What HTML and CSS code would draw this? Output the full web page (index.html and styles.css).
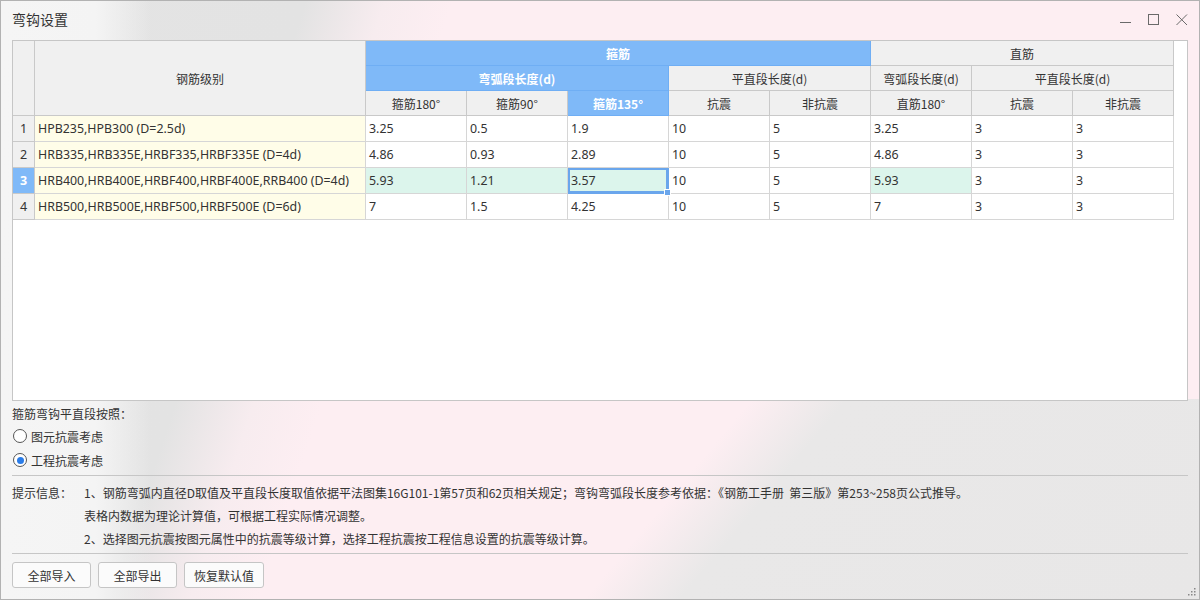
FILE: index.html
```html
<!DOCTYPE html>
<html lang="zh-CN">
<head>
<meta charset="utf-8">
<title>弯钩设置</title>
<link rel="stylesheet" href="styles.css">
</head>
<body>
<div class="window">
  <div class="titlebar">
    <span class="title">弯钩设置</span>
    <div class="controls">
      <svg class="ctl" width="12" height="12" viewBox="0 0 12 12"><line x1="0" y1="8.5" x2="11" y2="8.5" stroke="#6a6a6a" stroke-width="1"/></svg>
      <svg class="ctl" width="12" height="12" viewBox="0 0 12 12"><rect x="0.5" y="0.5" width="10" height="10" fill="none" stroke="#6a6a6a" stroke-width="1"/></svg>
      <svg class="ctl" width="12" height="12" viewBox="0 0 12 12"><path d="M0.5 0.5 L11 11 M11 0.5 L0.5 11" stroke="#6a6a6a" stroke-width="1" fill="none"/></svg>
    </div>
  </div>

  <div class="grid-wrap">
    <div class="grid">
      <div class="c h corner r1-3"></div>
      <div class="c h name-h r1-3">钢筋级别</div>
      <div class="c h blue span5">箍筋</div>
      <div class="c h span3">直筋</div>

      <div class="c h blue span3">弯弧段长度(d)</div>
      <div class="c h span2">平直段长度(d)</div>
      <div class="c h">弯弧段长度(d)</div>
      <div class="c h span2">平直段长度(d)</div>

      <div class="c h">箍筋180°</div>
      <div class="c h">箍筋90°</div>
      <div class="c h blue">箍筋135°</div>
      <div class="c h">抗震</div>
      <div class="c h">非抗震</div>
      <div class="c h">直筋180°</div>
      <div class="c h">抗震</div>
      <div class="c h">非抗震</div>

      <div class="c num">1</div>
      <div class="c d name">HPB235,HPB300 (D=2.5d)</div>
      <div class="c d">3.25</div><div class="c d">0.5</div><div class="c d">1.9</div><div class="c d">10</div><div class="c d">5</div><div class="c d">3.25</div><div class="c d">3</div><div class="c d">3</div>

      <div class="c num">2</div>
      <div class="c d name">HRB335,HRB335E,HRBF335,HRBF335E (D=4d)</div>
      <div class="c d">4.86</div><div class="c d">0.93</div><div class="c d">2.89</div><div class="c d">10</div><div class="c d">5</div><div class="c d">4.86</div><div class="c d">3</div><div class="c d">3</div>

      <div class="c num sel">3</div>
      <div class="c d name">HRB400,HRB400E,HRBF400,HRBF400E,RRB400 (D=4d)</div>
      <div class="c d green">5.93</div><div class="c d green">1.21</div><div class="c d green current">3.57</div><div class="c d">10</div><div class="c d">5</div><div class="c d green">5.93</div><div class="c d">3</div><div class="c d">3</div>

      <div class="c num">4</div>
      <div class="c d name">HRB500,HRB500E,HRBF500,HRBF500E (D=6d)</div>
      <div class="c d">7</div><div class="c d">1.5</div><div class="c d">4.25</div><div class="c d">10</div><div class="c d">5</div><div class="c d">7</div><div class="c d">3</div><div class="c d">3</div>
    </div>
  </div>

  <div class="option-label">箍筋弯钩平直段按照：</div>
  <div class="radio"><span class="circle"></span><span>图元抗震考虑</span></div>
  <div class="radio"><span class="circle checked"></span><span>工程抗震考虑</span></div>

  <div class="sep sep1"></div>

  <div class="hints">
    <div class="hint-title">提示信息：</div>
    <div class="hint-lines">
      <div>1、钢筋弯弧内直径D取值及平直段长度取值依据平法图集16G101-1第57页和62页相关规定；弯钩弯弧段长度参考依据：《钢筋工手册&nbsp;&nbsp;第三版》第253~258页公式推导。</div>
      <div>表格内数据为理论计算值，可根据工程实际情况调整。</div>
      <div>2、选择图元抗震按图元属性中的抗震等级计算，选择工程抗震按工程信息设置的抗震等级计算。</div>
    </div>
  </div>

  <div class="sep sep2"></div>

  <div class="buttons">
    <div class="btn">全部导入</div>
    <div class="btn">全部导出</div>
    <div class="btn">恢复默认值</div>
  </div>

  <svg class="grip" width="8" height="8" viewBox="0 0 8 8">
    <rect x="6" y="0" width="1.5" height="1.5" fill="#888"/>
    <rect x="3" y="3" width="1.5" height="1.5" fill="#888"/>
    <rect x="6" y="3" width="1.5" height="1.5" fill="#888"/>
    <rect x="0" y="6" width="1.5" height="1.5" fill="#888"/>
    <rect x="3" y="6" width="1.5" height="1.5" fill="#888"/>
    <rect x="6" y="6" width="1.5" height="1.5" fill="#888"/>
  </svg>
</div>
</body>
</html>
```

FILE: styles.css
```css
* { box-sizing: border-box; }
html, body { margin: 0; padding: 0; }
body {
  width: 1200px;
  height: 600px;
  overflow: hidden;
  font-family: "Noto Sans", "Noto Sans CJK SC", sans-serif;
  color: #333;
}
.window {
  position: relative;
  width: 1200px;
  height: 600px;
  border: 1px solid #b2b2b2;
  background:
    linear-gradient(to right, #f5f5f5 0, #f4f4f4 95px, rgba(244,244,244,0) 150px),
    linear-gradient(130deg, rgba(233,232,232,0) 0, rgba(233,232,232,0) 55%, #e9e8e8 62%, #e8e7e7 100%) left bottom / 100% 200px no-repeat,
    linear-gradient(108deg, #e4e4e4 0, #e3e3e3 290px, #f7ecef 365px, #fdeef2 430px, #fdeef2 100%);
}
.titlebar {
  height: 39px;
  display: flex;
  align-items: center;
  justify-content: space-between;
  padding: 0 11px 0 11px;
}
.title {
  font-size: 14px;
  line-height: 20px;
  margin-top: -1px;
}
.controls {
  display: flex;
  align-items: center;
  gap: 16px;
  margin-top: -1px;
}
.ctl { display: block; }

.grid-wrap {
  margin-left: 11px;
  width: 1176px;
  height: 361px;
  border: 1px solid #c6c6c6;
  background: #fff;
}
.grid {
  display: grid;
  grid-template-columns: 22px 331px repeat(8, 101px);
  grid-template-rows: 25px 25px 25px repeat(4, 26px);
  font-size: 12px;
}
.c {
  display: flex;
  align-items: center;
  border-right: 1px solid #d6d6d6;
  border-bottom: 1px solid #d6d6d6;
  white-space: nowrap;
  overflow: hidden;
}
.h {
  justify-content: center;
  background: #f0f0f0;
  border-color: #c9c9c9;
  font-family: "Noto Sans CJK SC", sans-serif;
}
.r1-3 { grid-row: 1 / span 3; }
.span5 { grid-column: span 5; }
.span3 { grid-column: span 3; }
.span2 { grid-column: span 2; }
.blue {
  background: #7fb9f8;
  color: #fff;
  font-weight: 700;
  border-color: #6faef4;
}
.num {
  justify-content: center;
  background: #f0f0f0;
  border-color: #c9c9c9;
  font-size: 12.5px;
}
.num.sel {
  background: #7fb9f8;
  color: #fff;
  font-weight: 700;
}
.d {
  padding-left: 3px;
  font-size: 12.4px;
}
.name {
  background: #fffde8;
}
.green { background: #dcf5ec; }
.current {
  position: relative;
  overflow: visible;
  box-shadow: inset 0 0 0 2px #6aa6ec;
  border-right-color: #6aa6ec;
  border-bottom-color: #6aa6ec;
}
.current::after {
  content: "";
  position: absolute;
  right: -3px;
  bottom: -3px;
  width: 5px;
  height: 5px;
  background: #6aa6ec;
  border: 1px solid #fff;
  z-index: 2;
}

.option-label {
  margin: 3px 0 0 11px;
  height: 20px;
  line-height: 20px;
  font-size: 12px;
  font-family: "Noto Sans CJK SC", sans-serif;
}
.radio {
  margin-left: 12px;
  height: 24px;
  display: flex;
  align-items: center;
  gap: 4px;
  font-size: 12px;
  font-family: "Noto Sans CJK SC", sans-serif;
}
.circle {
  width: 14px;
  height: 14px;
  border-radius: 50%;
  border: 1px solid #555;
  background: #fff;
  display: flex;
  align-items: center;
  justify-content: center;
}
.circle.checked::after {
  content: "";
  width: 7px;
  height: 7px;
  border-radius: 50%;
  background: #2a7ce8;
}
.sep {
  margin-left: 11px;
  width: 1176px;
  height: 1px;
  background: #c6c6c6;
}
.sep1 { margin-top: 3px; }
.hints {
  margin: 5px 0 0 11px;
  display: flex;
  font-size: 12px;
  line-height: 23px;
  font-family: "Noto Sans CJK SC", sans-serif;
}
.hint-title { width: 72px; }
.sep2 { margin-top: 3px; }
.buttons {
  margin: 8px 0 0 11px;
  display: flex;
  gap: 7px;
}
.btn {
  width: 79px;
  height: 26px;
  border: 1px solid #c5c5c5;
  border-radius: 3px;
  background: #fbfbfb;
  display: flex;
  align-items: center;
  justify-content: center;
  font-size: 12px;
  font-family: "Noto Sans CJK SC", sans-serif;
}
.btn:last-child { width: 80px; }
.grip {
  position: absolute;
  right: 3px;
  bottom: 3px;
}
```
